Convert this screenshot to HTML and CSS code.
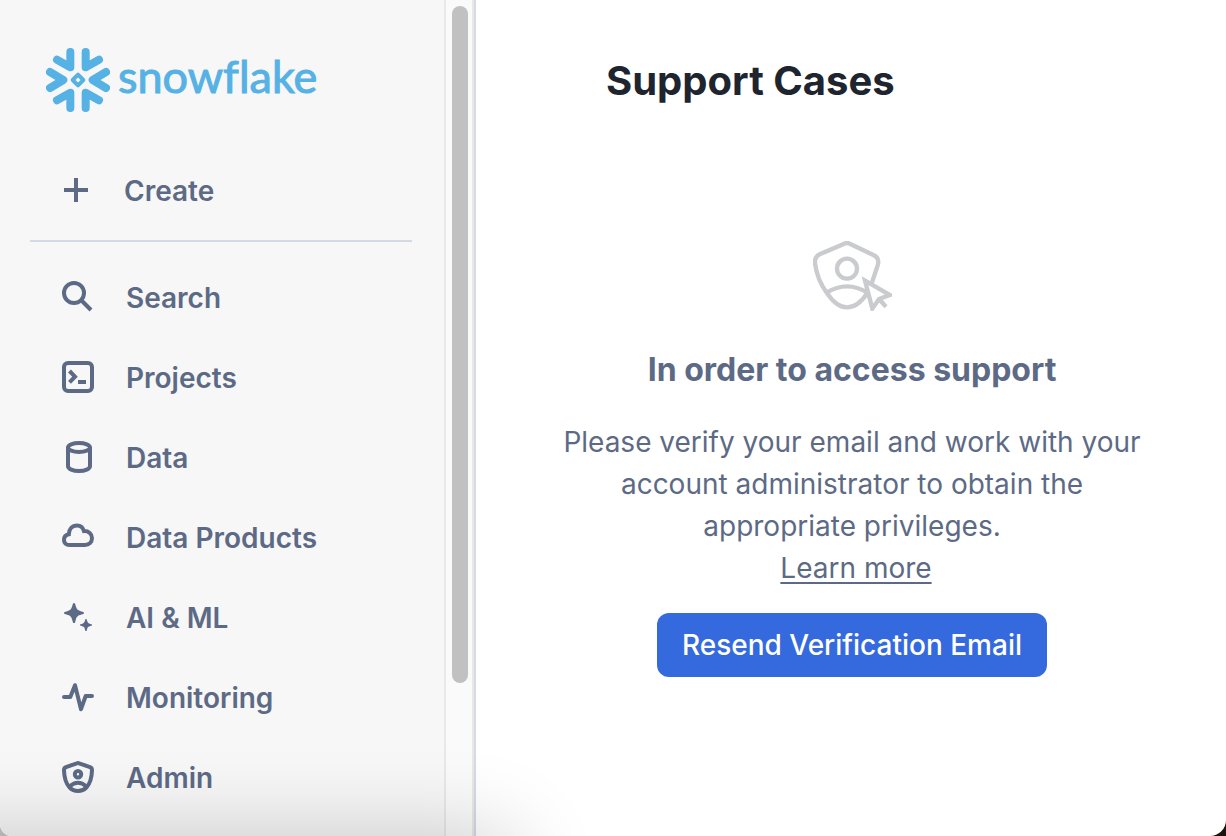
FILE: index.html
```html
<!DOCTYPE html>
<html lang="en">
<head>
<meta charset="utf-8">
<title>Support Cases</title>
<link rel="stylesheet" href="styles.css">
</head>
<body>
<div class="window">
  <aside class="sidebar">
    <div class="sidebar-content">
      <a class="brand" href="#">
        <svg class="brand-mark" viewBox="48 54 192 192" aria-hidden="true">
          <g fill="none" stroke="currentColor" stroke-width="24" stroke-linecap="round" stroke-linejoin="round">
            <path d="M121 66v46L81 89"/><path d="M167 66v46l40-23"/>
            <path d="M121 234v-46l-40 23"/><path d="M167 234v-46l40 23"/>
            <path d="M60 126l40 24-40 24"/><path d="M228 126l-40 24 40 24"/>
            <path d="M144 134l16 16-16 16-16-16z" stroke-width="12"/>
          </g>
        </svg>
        <span class="brand-name">snowflake</span>
      </a>
      <button class="nav-item create" type="button">
        <svg class="icon" viewBox="0 0 32 32" aria-hidden="true"><path d="M14 4v24M2 16h24"/></svg>
        <span>Create</span>
      </button>
      <nav class="nav">
        <a class="nav-item" href="#">
          <svg class="icon" viewBox="0 0 32 32" aria-hidden="true"><circle cx="12" cy="12" r="10"/><path d="M19 19l10 10"/></svg>
          <span>Search</span>
        </a>
        <a class="nav-item" href="#">
          <svg class="icon" viewBox="0 0 32 32" aria-hidden="true"><rect x="2" y="2" width="28" height="28" rx="4"/><path d="M7.500 10l5.500 5.700-5.500 5.700M16 21h8"/></svg>
          <span>Projects</span>
        </a>
        <a class="nav-item" href="#">
          <svg class="icon" viewBox="0 0 32 32" aria-hidden="true"><ellipse cx="17" cy="6.500" rx="11" ry="4.500"/><path d="M6 6.500V25c0 3 5 5 11 5s11-2 11-5V6.500"/></svg>
          <span>Data</span>
        </a>
        <a class="nav-item" href="#">
          <svg class="icon" viewBox="0 0 32 32" aria-hidden="true"><path d="M7.500 24C4 24 2 21.700 2 18.900c0-2.800 1.800-5 4.800-5.600C7 8 10.300 4.500 15 4.500c3.600 0 6 2.200 7 5.600 4.700-.1 8 2.700 8 7 0 4.200-3 6.900-7 6.900z"/></svg>
          <span>Data Products</span>
        </a>
        <a class="nav-item" href="#">
          <svg class="icon icon-solid" viewBox="0 0 32 32" aria-hidden="true"><path d="M12 2c1 0 1.200 1 1.600 2.600 1 3.700 2.100 4.800 5.800 5.800C21 10.800 22 11 22 12s-1 1.200-2.600 1.600c-3.700 1-4.800 2.100-5.800 5.800C13.200 21 13 22 12 22s-1.200-1-1.600-2.600c-1-3.700-2.100-4.800-5.800-5.800C3 13.200 2 13 2 12s1-1.200 2.600-1.600c3.700-1 4.800-2.100 5.800-5.800C10.800 3 11 2 12 2z"/><path d="M24 18c.7 0 .8.700 1 1.600.5 2.100 1.300 2.900 3.400 3.400.9.200 1.600.3 1.600 1s-.7.800-1.600 1c-2.100.5-2.900 1.300-3.400 3.400-.2.900-.3 1.600-1 1.600s-.8-.7-1-1.600c-.5-2.100-1.300-2.900-3.400-3.400-.9-.2-1.600-.3-1.600-1s.7-.8 1.600-1c2.100-.5 2.900-1.300 3.400-3.400.2-.9.300-1.600 1-1.600z"/></svg>
          <span>AI &amp; ML</span>
        </a>
        <a class="nav-item" href="#">
          <svg class="icon icon-round" viewBox="0 0 32 32" aria-hidden="true"><path d="M2 16h6.300L13 4.200 19 28.200l4.700-13.200H30"/></svg>
          <span>Monitoring</span>
        </a>
        <a class="nav-item" href="#">
          <svg class="icon icon-round" viewBox="0 0 32 32" aria-hidden="true"><path d="M14.800 2.300q1.200-.5 2.400 0L28 6.200q2 .8 2 3C29.800 16 27.500 23 24.500 26.300 22 29 19 30 16 30s-6-1-8.500-3.700C4.500 23 2.200 16 2 9.200q0-2.200 2-3z"/><circle cx="16" cy="13.300" r="3.200"/><path d="M7.500 25.500q8.500-7.500 17 0"/></svg>
          <span>Admin</span>
        </a>
      </nav>
    </div>
    <div class="scrollbar"><div class="scrollbar-thumb"></div></div>
  </aside>
  <main class="main">
    <h1 class="page-title">Support Cases</h1>
    <section class="empty-state">
      <svg class="empty-icon" viewBox="66 62 237 210" aria-hidden="true">
        <path d="M242 189l19-57q4-20-14-28l-69-33q-10-6-20 0L86 102q-15 7-14 26c4 35 14 60 35 89 20 29 40 44 61 44 23 0 44-17 61-43M107 217q61-38 122 0"/>
        <circle cx="168" cy="145" r="30"/>
        <path d="M222 181l74 43-32 12-20 29zM264 236l21 23"/>
      </svg>
      <h2 class="empty-title">In order to access support</h2>
      <p class="empty-text">Please verify your email and work with your account administrator to obtain the appropriate privileges.</p>
      <a class="empty-link" href="#">Learn more</a>
      <button class="primary-button" type="button">Resend Verification Email</button>
    </section>
  </main>
</div>
</body>
</html>
```
FILE: styles.css
```css
* {
  box-sizing: border-box;
}

body {
  margin: 0;
  background: linear-gradient(90deg, #b4b4b4 50%, #1a140e 50%);
  font-family: Inter, "Liberation Sans", sans-serif;
  font-size: 28px;
  color: #5d6a85;
}

.window {
  position: relative;
  display: flex;
  min-height: 100vh;
  overflow: hidden;
  background: #fff;
  border-radius: 0 0 16px 12px;
}

/* soft shade rising from the lower left edge */
.window::after {
  content: "";
  position: absolute;
  top: 100%;
  left: -200px;
  width: 712px;
  height: 200px;
  box-shadow: 0 0 88px rgba(0, 0, 0, 0.2);
  pointer-events: none;
}

.sidebar {
  display: flex;
  flex: none;
  width: 476px;
  background: #f7f7f7;
  border-right: 2px solid #d5d9e4;
}

.sidebar-content {
  flex: 1;
  padding: 48px 32px 0 30px;
}

.brand {
  display: flex;
  align-items: center;
  gap: 8px;
  height: 64px;
  padding-left: 16px;
  color: #56b1e4;
  text-decoration: none;
}

.brand-mark {
  width: 64px;
  height: 64px;
}

.brand-name {
  padding-bottom: 8px;
  font-family: Lato, sans-serif;
  font-size: 45px;
  line-height: 56px;
  font-variant-ligatures: none;
  -webkit-text-stroke: 1px currentColor;
}

.nav-item {
  display: flex;
  align-items: center;
  gap: 32px;
  width: 100%;
  height: 80px;
  padding: 0 32px;
  border: 0;
  background: none;
  color: inherit;
  font: inherit;
  font-weight: 600;
  text-align: left;
  text-decoration: none;
}

.create {
  height: 130px;
  padding-top: 30px;
  border-bottom: 2px solid #d5d9e4;
}

.create .icon {
  margin-right: -2px;
}

.nav {
  padding-top: 16px;
}

.icon {
  flex: none;
  width: 32px;
  height: 32px;
  margin-bottom: 2px;
  fill: none;
  stroke: currentColor;
  stroke-width: 4;
}

.icon-round {
  stroke-linecap: round;
  stroke-linejoin: round;
}

.icon-solid {
  fill: currentColor;
  stroke: none;
}

.scrollbar {
  width: 30px;
  padding: 6px;
  background: #fafafa;
  border: solid #e8e8e8;
  border-width: 0 2px;
}

.scrollbar-thumb {
  width: 16px;
  height: 81vh;
  border-radius: 8px;
  background: #c1c1c1;
}

.main {
  flex: 1;
  padding: 56px 78px 56px 80px;
}

.page-title {
  margin: 0;
  padding-left: 50px;
  font-size: 40px;
  line-height: 50px;
  font-weight: 700;
  color: #1e252f;
}

.empty-state {
  display: flex;
  flex-direction: column;
  align-items: center;
  padding-top: 135px;
  text-align: center;
}

.empty-icon {
  width: 79px;
  height: 70px;
  fill: none;
  stroke: #cacbcf;
  stroke-width: 13;
}

.empty-title {
  margin: 39px 0 31px;
  font-size: 32px;
  line-height: 40px;
  font-weight: 700;
}

.empty-text {
  max-width: 580px;
  margin: 0;
  line-height: 42px;
}

.empty-link {
  padding-left: 8px;
  color: inherit;
  line-height: 42px;
  text-underline-offset: 4px;
  text-decoration-thickness: 2px;
}

.primary-button {
  height: 64px;
  margin-top: 24px;
  padding: 0 25px;
  border: 0;
  border-radius: 12px;
  background: #3569de;
  color: #fff;
  font: inherit;
  font-weight: 500;
}
```
